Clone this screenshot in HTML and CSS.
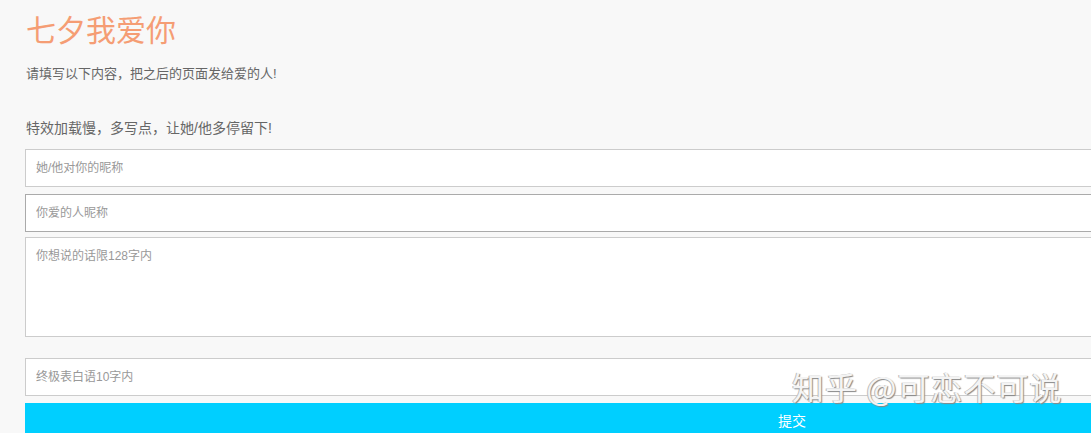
FILE: index.html
```html
<!DOCTYPE html>
<html lang="zh-CN">
<head>
<meta charset="utf-8">
<title>七夕我爱你</title>
<link rel="stylesheet" href="styles.css">
</head>
<body>
<div class="page">
  <h1 class="title">七夕我爱你</h1>
  <p class="intro">请填写以下内容，把之后的页面发给爱的人!</p>
  <p class="hint">特效加载慢，多写点，让她/他多停留下!</p>
  <form class="form">
    <input class="field" type="text" placeholder="她/他对你的昵称">
    <input class="field field-active" type="text" placeholder="你爱的人昵称">
    <textarea class="field area" placeholder="你想说的话限128字内"></textarea>
    <input class="field field-last" type="text" placeholder="终极表白语10字内">
    <button class="submit" type="button">提交</button>
  </form>
</div>
<div class="watermark">知乎 @可恋不可说</div>
</body>
</html>
```
FILE: styles.css
```css
html, body {
  margin: 0;
  padding: 0;
  overflow: hidden;
  background: #f8f8f8;
  font-family: "Liberation Sans", "Noto Sans CJK SC", sans-serif;
}
.page {
  padding: 11px 0 0 25px;
  width: 1600px;
}
.title {
  margin: 0 0 0 1px;
  font-size: 30px;
  line-height: 40px;
  font-weight: normal;
  color: #f59d74;
}
.intro {
  margin: 13px 0 0 1px;
  font-size: 13px;
  line-height: 20px;
  color: #666;
}
.hint {
  margin: 34px 0 0 1px;
  font-size: 14px;
  line-height: 20px;
  color: #666;
}
.form {
  display: flex;
  flex-direction: column;
  width: 1534px;
  margin-top: 11px;
}
.field {
  box-sizing: border-box;
  width: 100%;
  height: 38px;
  padding: 0 10px;
  margin: 0;
  border: 1px solid #ccc;
  background: #fff;
  font-family: "Liberation Sans", "Noto Sans CJK SC", sans-serif;
  font-size: 12px;
  color: #333;
  outline: none;
}
.field::placeholder {
  color: #999;
}
.field-active {
  margin-top: 7px;
  border-color: #aaa;
}
.area {
  margin-top: 5px;
  height: 100px;
  padding: 10px;
  resize: none;
  line-height: 16px;
}
.field-last {
  margin-top: 21px;
}
.submit {
  margin-top: 7px;
  height: 34px;
  border: 0;
  background: #00cfff;
  color: #fff;
  font-family: "Liberation Sans", "Noto Sans CJK SC", sans-serif;
  font-size: 14px;
  padding: 0;
}
.watermark {
  position: absolute;
  left: 792px;
  top: 367px;
  font-family: "Noto Sans CJK SC", sans-serif;
  font-size: 32px;
  line-height: 38px;
  letter-spacing: 1px;
  color: #f4f4f4;
  text-shadow: 1px 1px 1px #888, -1px 0 0 #bbb;
  white-space: nowrap;
}
```
